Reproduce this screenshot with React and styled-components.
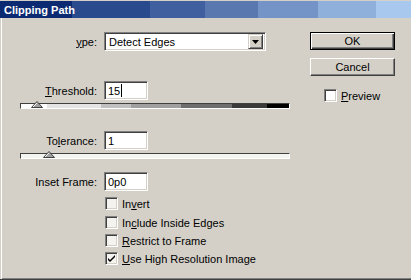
import React from 'react'
import styled, { createGlobalStyle } from 'styled-components'

const GlobalStyle = createGlobalStyle`
  html, body {
    margin: 0;
    padding: 0;
    background: #d4d0c8;
  }
  * { box-sizing: border-box; }
`

const Window = styled.div`
  width: 411px;
  height: 280px;
  background: #d4d0c8;
  display: flex;
  flex-direction: column;
  font-family: "Liberation Sans", Arial, sans-serif;
  font-size: 11px;
  color: #000;
  overflow: hidden;
  border-bottom: 1px solid #404040;
  box-shadow: inset 0 -1px #808080;
  padding-top: 1px;
`

const TitleBar = styled.div`
  height: 17px;
  flex-shrink: 0;
  display: flex;
  align-items: center;
  padding-left: 4px;
  color: #fff;
  font-weight: bold;
  font-size: 11px;
  background: linear-gradient(
    to right,
    #0c2a72 0 72px,
    #2a4a8e 72px 150px,
    #3f5f9e 150px 205px,
    #5a78b0 205px 258px,
    #7494c8 258px 318px,
    #90b0dc 318px 376px,
    #a8c8ee 376px
  );
`

const Body = styled.div`
  flex: 1;
  display: flex;
  padding: 0 0 0 19px;
  border-left: 1px solid #d4d0c8;
  box-shadow: inset 1px 0 #fff;
`

const LeftColumn = styled.div`
  width: 270px;
  display: flex;
  flex-direction: column;
`

const RightColumn = styled.div`
  margin-left: 20px;
  width: 85px;
  display: flex;
  flex-direction: column;
  padding-top: 14px;
`

const Row = styled.div`
  display: flex;
  align-items: center;
  margin-top: ${p => p.$mt || 0}px;
  height: ${p => p.$h || 19}px;
`

const Label = styled.label`
  width: 78px;
  text-align: right;
  padding-right: 1px;
  white-space: nowrap;
`

const TextBox = styled.div`
  margin-left: 6px;
  width: ${p => p.$w || 44}px;
  height: 19px;
  background: #fff;
  border: 1px solid;
  border-color: #808080 #fff #fff #808080;
  box-shadow: inset 1px 1px #404040, inset -1px -1px #d4d0c8;
  display: flex;
  align-items: center;
  padding-left: 3px;
  white-space: nowrap;
`

const Caret = styled.span`
  display: inline-block;
  width: 1px;
  height: 13px;
  background: #000;
  margin-left: 1px;
`

const Select = styled(TextBox)`
  justify-content: space-between;
  padding-right: 2px;
  padding-left: 4px;
`

const DropButton = styled.div`
  width: 15px;
  height: 15px;
  background: #d4d0c8;
  border: 1px solid;
  border-color: #d4d0c8 #404040 #404040 #d4d0c8;
  box-shadow: inset 1px 1px #fff, inset -1px -1px #808080;
  display: flex;
  align-items: center;
  justify-content: center;
`

const Track = styled.div`
  position: relative;
  width: 270px;
  height: 6px;
  margin-top: ${p => p.$mt || 0}px;
  border: 1px solid;
  border-color: #404040 #fff #fff #404040;
  background: ${p =>
    p.$ramp
      ? 'linear-gradient(to right, #ffffff 0 26px, #e4e4e4 26px 80px, #c0c0c0 80px 110px, #a0a0a0 110px 160px, #6e6e6e 160px 211px, #3a3a3a 211px 246px, #000 246px)'
      : '#f4f4f0'};
`

const Thumb = styled.svg`
  position: absolute;
  top: -3px;
  margin-left: -6px;
`

const CheckRow = styled.div`
  display: flex;
  align-items: center;
  margin-top: ${p => p.$mt || 0}px;
  padding-left: ${p => p.$indent || 0}px;
  height: 13px;
  white-space: nowrap;
`

const Box = styled.div`
  width: 13px;
  height: 13px;
  flex-shrink: 0;
  background: ${p => (p.$light ? '#fff' : '#f4f3ef')};
  border: 1px solid;
  border-color: #808080 #fff #fff #808080;
  box-shadow: inset 1px 1px #404040, inset -1px -1px #d4d0c8;
  display: flex;
  align-items: center;
  justify-content: center;
  margin-right: 4px;
`

const Button = styled.div`
  width: 85px;
  height: 18px;
  margin-top: ${p => p.$mt || 0}px;
  display: flex;
  align-items: center;
  justify-content: center;
  background: #d4d0c8;
  border: 1px solid;
  border-color: ${p => (p.$default ? '#000' : '#fff #404040 #404040 #fff')};
  box-shadow: ${p =>
    p.$default
      ? 'inset 1px 1px #fff, inset -1px -1px #404040, inset -2px -2px #808080'
      : 'inset -1px -1px #808080'};
`

const Check = () => (
  <svg width="9" height="9" viewBox="0 0 9 9">
    <path d="M1 4 L3 6 L8 1 L8 3 L3 8 L1 6 Z" fill="#000" />
  </svg>
)

const SliderThumb = ({ pos }) => (
  <Thumb width="12" height="7" viewBox="0 0 12 7" style={{ left: pos }}>
    <path d="M6 0.5 L11.5 6.5 L0.5 6.5 Z" fill="#a0a0a0" stroke="#404040" strokeWidth="1" />
    <path d="M6 1.8 L2 6" stroke="#fff" strokeWidth="1" />
  </Thumb>
)

const Checkbox = ({ checked, light, children, mt, indent }) => (
  <CheckRow $mt={mt} $indent={indent}>
    <Box $light={light}>{checked && <Check />}</Box>
    <span>{children}</span>
  </CheckRow>
)

export default function App() {
  return (
    <>
      <GlobalStyle />
      <Window>
        <TitleBar>Clipping Path</TitleBar>
        <Body>
          <LeftColumn>
            <Row $mt={14}>
              <Label><u>y</u>pe:</Label>
              <Select $w={162}>
                <span>Detect Edges</span>
                <DropButton>
                  <svg width="7" height="4" viewBox="0 0 7 4">
                    <path d="M0 0 H7 L3.5 4 Z" fill="#000" />
                  </svg>
                </DropButton>
              </Select>
            </Row>
            <Row $mt={30}>
              <Label><u>T</u>hreshold:</Label>
              <TextBox>15<Caret /></TextBox>
            </Row>
            <Track $mt={3} $ramp>
              <SliderThumb pos={16} />
            </Track>
            <Row $mt={22}>
              <Label>To<u>l</u>erance:</Label>
              <TextBox>1</TextBox>
            </Row>
            <Track $mt={3}>
              <SliderThumb pos={28} />
            </Track>
            <Row $mt={13}>
              <Label>Inset Frame:</Label>
              <TextBox>0p0</TextBox>
            </Row>
            <Checkbox mt={6} indent={85}>In<u>v</u>ert</Checkbox>
            <Checkbox mt={6} indent={85}>In<u>c</u>lude Inside Edges</Checkbox>
            <Checkbox mt={5} indent={85}><u>R</u>estrict to Frame</Checkbox>
            <Checkbox mt={5} indent={85} checked><u>U</u>se High Resolution Image</Checkbox>
          </LeftColumn>
          <RightColumn>
            <Button $default>OK</Button>
            <Button $mt={8}>Cancel</Button>
            <Checkbox mt={13} indent={14} light><u>P</u>review</Checkbox>
          </RightColumn>
        </Body>
      </Window>
    </>
  )
}
